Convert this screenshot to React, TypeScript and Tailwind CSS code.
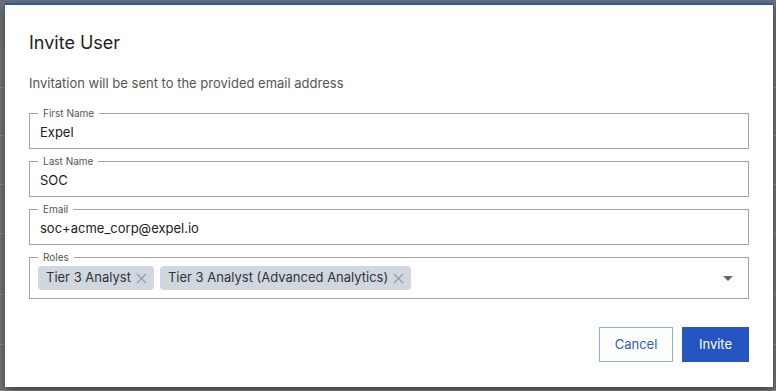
import { X } from "lucide-react";

const fields = [
  { label: "First Name", value: "Expel" },
  { label: "Last Name", value: "SOC" },
  { label: "Email", value: "soc+acme_corp@expel.io" },
];

const roles = ["Tier 3 Analyst", "Tier 3 Analyst (Advanced Analytics)"];

const bgRows = [45, 48, 49, 49, 61, 50, 46];

export default function App() {
  return (
    <div className="relative w-[776px] h-[391px] overflow-hidden bg-[#747474] font-['Inter',sans-serif]">
      {/* dimmed page behind the dialog */}
      <div className="flex flex-col">
        <div className="h-[43px] bg-[#6c7177]" />
        {bgRows.map((h, i) => (
          <div key={i} style={{ height: h }} className="border-b border-[#8a8a8a]" />
        ))}
      </div>

      <div className="absolute left-[5px] top-[3px] w-[768px] h-[384px] bg-white border-t-2 border-[#2457c5] shadow-[0_4px_10px_rgba(0,0,0,0.45)]">
        <div className="px-6 pt-6 flex flex-col">
          <h2 className="text-[18px] leading-[28px] text-[#222]">Invite User</h2>
          <p className="mt-4 text-[13px] leading-[20px] text-[#555]">
            Invitation will be sent to the provided email address
          </p>

          <div className="mt-[14px] flex flex-col gap-[6px]">
            {fields.map(f => (
              <fieldset key={f.label} className="border border-[#a3a3a3] px-[8px] pb-[6px]">
                <legend className="px-[5px] text-[10px] leading-[12px] text-[#555]">{f.label}</legend>
                <div className="pt-[3px] pl-[2px] text-[13px] leading-[20px] text-[#222]">{f.value}</div>
              </fieldset>
            ))}

            <fieldset className="border border-[#a3a3a3] px-[8px] pb-[8px]">
              <legend className="px-[5px] text-[10px] leading-[12px] text-[#555]">Roles</legend>
              <div className="pt-[3px] flex items-center">
                <div className="flex-1 flex gap-[6px]">
                  {roles.map(r => (
                    <span
                      key={r}
                      className="h-[24px] flex items-center gap-[6px] pl-2 pr-2 rounded-[4px] bg-[#d0d7e1] text-[13px] text-[#333]"
                    >
                      {r}
                      <X size={17} strokeWidth={1.5} className="-mx-[4px] text-[#999]" />
                    </span>
                  ))}
                </div>
                <svg width="10" height="5" viewBox="0 0 10 5" className="mr-[7px]">
                  <path d="M0 0h10L5 5z" fill="#666" />
                </svg>
              </div>
            </fieldset>
          </div>

          <div className="mt-[28px] flex justify-end gap-[9px]">
            <button className="w-[74px] h-[35px] border border-[#8daee2] text-[#2a5cc6] text-[13px]">
              Cancel
            </button>
            <button className="w-[67px] h-[35px] bg-[#2555c0] text-white text-[13px]">Invite</button>
          </div>
        </div>
      </div>
    </div>
  );
}
